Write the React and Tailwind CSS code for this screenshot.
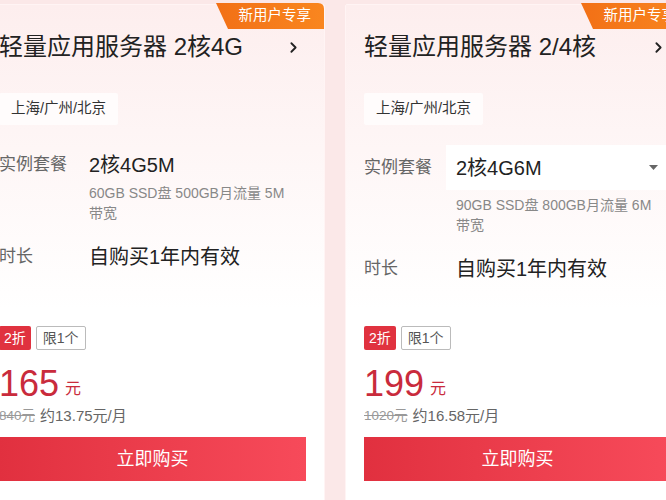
import React from 'react';
import { ChevronRight } from 'lucide-react';

const FONT = { fontFamily: '"Liberation Sans", "Noto Sans CJK SC", sans-serif' };

const cards = [
  {
    title: '轻量应用服务器 2核4G',
    plan: '2核4G5M',
    select: false,
    desc: ['60GB SSD盘 500GB月流量 5M', '带宽'],
    price: '165',
    orig: '840元',
    monthly: '约13.75元/月',
  },
  {
    title: '轻量应用服务器 2/4核',
    plan: '2核4G6M',
    select: true,
    desc: ['90GB SSD盘 800GB月流量 6M', '带宽'],
    price: '199',
    orig: '1020元',
    monthly: '约16.58元/月',
  },
];

function Badge() {
  return (
    <div className="absolute top-[-2px] right-0 h-[26px] w-[108px]">
      <svg className="absolute inset-0" width="108" height="26" viewBox="0 0 108 26">
        <defs>
          <linearGradient id="bg" x1="0" y1="0" x2="1" y2="0">
            <stop offset="0" stopColor="#f27016" />
            <stop offset="1" stopColor="#f9861f" />
          </linearGradient>
        </defs>
        <path d="M0 0 H102 Q108 0 108 6 V26 H12 Z" fill="url(#bg)" />
      </svg>
      <span className="relative flex h-full items-center justify-end pr-[13px] text-[14.5px] text-white">新用户专享</span>
    </div>
  );
}

function Card({ c }) {
  return (
    <div className="relative mt-[4px] flex h-[510px] w-[345px] shrink-0 flex-col rounded-[2px] border border-[#fff4f4] bg-linear-to-b from-[#fdeeee] from-0% to-white to-60% px-[18px] pb-[32px] pt-[27px]">
      <Badge />
      <div className="flex h-[30px] items-center justify-between">
        <span className="text-[24px] leading-[30px] text-[#222]">{c.title}</span>
        <ChevronRight size={17} strokeWidth={2.6} className="mr-[4px] text-[#222]" />
      </div>
      <div className="mt-[31px] flex">
        <span className="flex h-[32px] items-center rounded-[2px] bg-white/70 px-[12px] text-[14.5px] text-[#333]">上海/广州/北京</span>
      </div>

      {c.select ? (
        <div className="mt-[20px] flex h-[45px] items-center">
          <span className="w-[82px] shrink-0 text-[17px] text-[#666]">实例套餐</span>
          <div className="flex h-[45px] flex-1 items-center justify-between bg-white pl-[10px] pr-[13px]">
            <span className="text-[20px] text-[#222]">{c.plan}</span>
            <svg width="9" height="5" viewBox="0 0 9 5"><path d="M0 0 H9 L4.5 5 Z" fill="#666" /></svg>
          </div>
        </div>
      ) : (
        <div className="mt-[28px] flex h-[24px] items-center">
          <span className="w-[90px] shrink-0 text-[17px] text-[#666]">实例套餐</span>
          <span className="text-[20px] text-[#222]">{c.plan}</span>
        </div>
      )}
      <div className={c.select ? 'mt-[5px] pl-[92px]' : 'mt-[6px] pl-[90px]'}>
        {c.desc.map((d) => (
          <div key={d} className="text-[14px] leading-[20px] text-[#888]">{d}</div>
        ))}
      </div>
      <div className="mt-[22px] flex h-[24px] items-center">
        <span className={(c.select ? 'w-[92px]' : 'w-[90px]') + ' shrink-0 text-[17px] text-[#666]'}>时长</span>
        <span className="text-[20px] text-[#222]">自购买1年内有效</span>
      </div>

      <div className="mt-auto">
        <div className="flex gap-[5px]">
          <span className="flex h-[24px] items-center rounded-[2px] bg-[#e0323f] px-[5px] text-[14px] text-white">2折</span>
          <span className="flex h-[24px] items-center rounded-[2px] border border-[#bbb] bg-white px-[6px] text-[14px] text-[#555]">限1个</span>
        </div>
        <div className="mt-[14px] flex h-[40px] items-end">
          <span className="text-[36px] leading-[40px] text-[#c92b3c]">{c.price}</span>
          <span className="mb-[5px] ml-[6px] text-[16px] leading-[20px] text-[#c92b3c]">元</span>
        </div>
        <div className="mt-[2px] flex h-[20px] items-center gap-[5px]">
          <span className="text-[13.5px] text-[#999] line-through">{c.orig}</span>
          <span className="text-[15px] text-[#666]">{c.monthly}</span>
        </div>
        <button className="mt-[11px] flex h-[44px] w-full items-center justify-center bg-linear-to-r from-[#e1303f] to-[#f74a5a] text-[18px] text-white">
          立即购买
        </button>
      </div>
    </div>
  );
}

export default function App() {
  return (
    <div className="h-[500px] w-[666px] overflow-hidden bg-[#fbe8e8]" style={FONT}>
      <div className="ml-[-20px] flex gap-[20px]">
        {cards.map((c) => (
          <Card key={c.title} c={c} />
        ))}
      </div>
    </div>
  );
}
